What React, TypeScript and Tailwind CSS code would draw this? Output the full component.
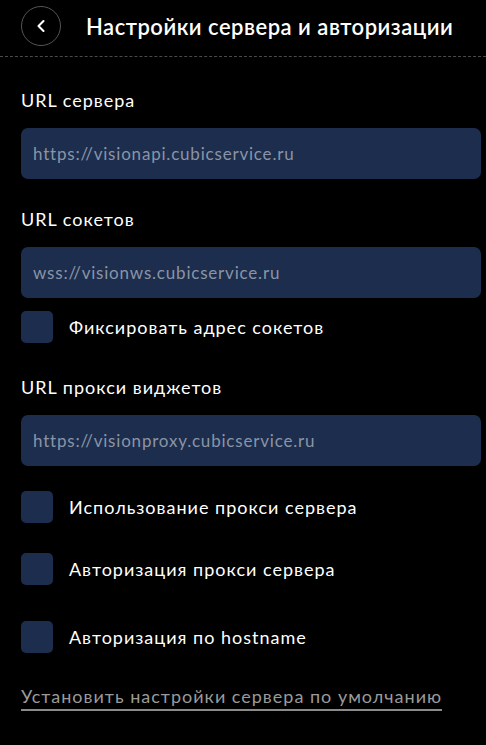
import { ChevronLeft } from "lucide-react";

const font = { fontFamily: "Lato, 'Noto Sans', sans-serif" };

function Field({ label, value }: { label: string; value: string }) {
  return (
    <div className="flex flex-col">
      <div className="h-[28px] flex items-center text-[18px] tracking-[1px] text-white">{label}</div>
      <div className="mt-[14px] h-[51px] rounded-[7px] bg-[#1c2d4d] flex items-center px-[12px] text-[17px] tracking-[0.8px] text-[#8a94a6]">
        {value}
      </div>
    </div>
  );
}

function Check({ label }: { label: string }) {
  return (
    <div className="flex items-center gap-[16px]">
      <div className="w-[32px] h-[32px] rounded-[5px] bg-[#1c2d4d] shrink-0" />
      <span className="text-[18px] tracking-[1px] text-white">{label}</span>
    </div>
  );
}

export default function App() {
  return (
    <div className="w-[486px] h-[745px] bg-black overflow-hidden" style={font}>
      {/* header */}
      <div className="h-[57px] flex items-center pl-[21px] pb-[4px] border-b border-dashed border-[#4a4a4a]">
        <div className="w-[40px] h-[40px] rounded-full border border-[#555] flex items-center justify-center">
          <ChevronLeft size={20} strokeWidth={2.5} className="text-white -ml-[1px]" />
        </div>
        <h1 className="ml-[25px] text-[22px] font-semibold tracking-[0.5px] text-white">
          Настройки сервера и авторизации
        </h1>
      </div>

      <div className="pl-[21px] pr-[5px] pt-[29px]">
        <Field label="URL сервера" value="https://visionapi.cubicservice.ru" />
        <div className="mt-[26px]">
          <Field label="URL сокетов" value="wss://visionws.cubicservice.ru" />
        </div>
        <div className="mt-[13px]">
          <Check label="Фиксировать адрес сокетов" />
        </div>
        <div className="mt-[30px]">
          <Field label="URL прокси виджетов" value="https://visionproxy.cubicservice.ru" />
        </div>
        <div className="mt-[25px]">
          <Check label="Использование прокси сервера" />
        </div>
        <div className="mt-[30px]">
          <Check label="Авторизация прокси сервера" />
        </div>
        <div className="mt-[36px]">
          <Check label="Авторизация по hostname" />
        </div>
        <div className="mt-[31px]">
          <span className="inline-block text-[18px] tracking-[1px] text-[#9a9a9a] border-b-[2px] border-[#8a8a8a] pb-[1px] leading-[24px]">
            Установить настройки сервера по умолчанию
          </span>
        </div>
      </div>
    </div>
  );
}
